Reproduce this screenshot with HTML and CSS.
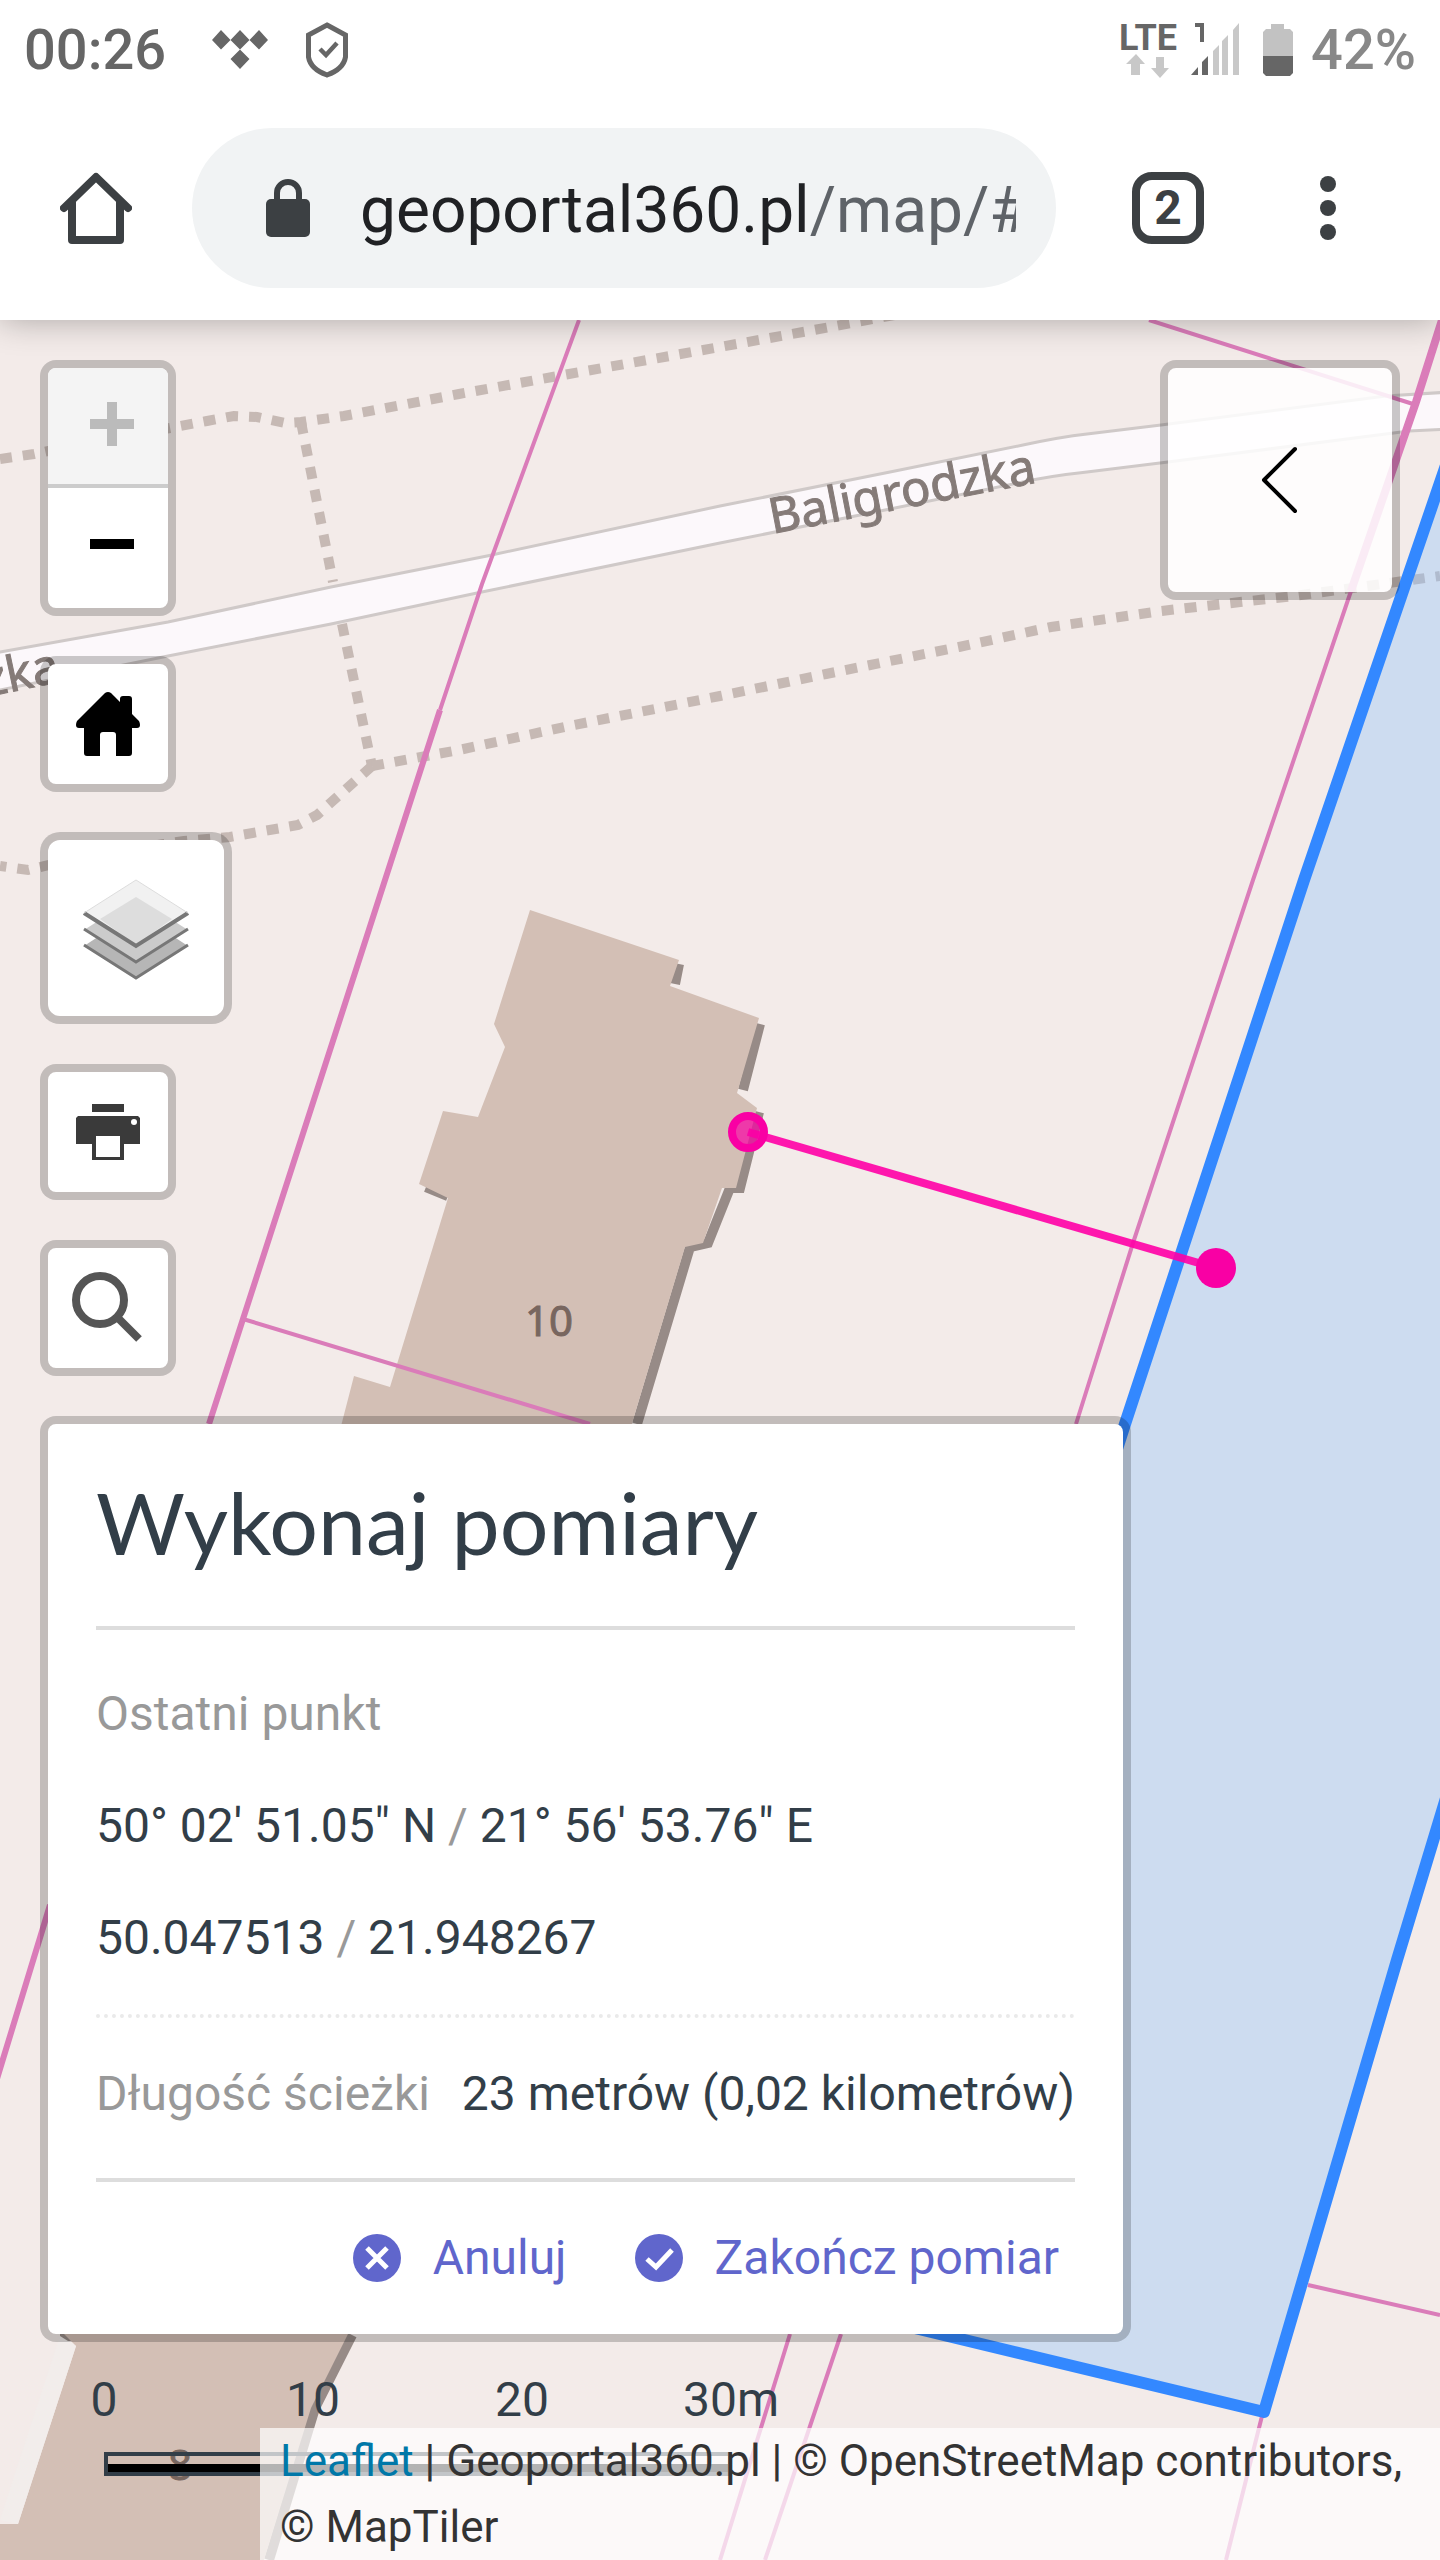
FILE: index.html
```html
<!DOCTYPE html>
<html lang="pl">
<head>
<meta charset="utf-8">
<meta name="viewport" content="width=device-width">
<title>Geoportal360 – mapa</title>
<link rel="stylesheet" href="styles.css">
</head>
<body>
<header class="chrome">
  <div class="status">
    <span class="clock">00:26</span>
    <svg class="tidal" width="56" height="40" viewBox="0 0 56 40" fill="#666" aria-hidden="true"><path d="M9 0l9.500 10-9.500 9.500L0 10zM28 0l9.500 10L28 19.500 18.500 10zM47 0l9 10-9 9.500L37.500 10zM28 19.500l9.500 9.500L28 39l-9.500-10z"/></svg>
    <svg class="shield" width="42" height="56" viewBox="0 0 42 56" fill="none" stroke="#666" stroke-width="5" aria-hidden="true"><path d="M21 3l18.500 10v22q-2 12-18.500 18Q4.500 47 2.500 35V13z"/><path d="M14 27l6 6 11-12" stroke-width="4.500"/></svg>
    <div class="network">
      <span class="lte">LTE</span>
      <svg width="44" height="24" viewBox="0 0 44 24" fill="#c8c8c8" aria-hidden="true"><path d="M10 0l9 10h-5v11H5V10H0zM30 3h8v11h5l-9 10-9-10h5z"/></svg>
    </div>
    <svg width="52" height="54" viewBox="0 0 52 54" aria-hidden="true"><g fill="#666"><path d="M6 0h9v19h-4V4H6z"/><path d="M2 52l7-8v8zM13 52V39l6-6v19z"/></g><path fill="#c8c8c8" d="M24 52V28l6-6v30zM33 52V18l6-6v40zM44 52V7l6-7v52z"/></svg>
    <svg width="30" height="52" viewBox="0 0 30 52" aria-hidden="true"><path fill="#c2c2c2" d="M8 0h13v5h6l3 3v24H0V8l3-3h5z"/><path fill="#666" d="M0 32h30v17l-3 3H3l-3-3z"/></svg>
    <span class="percent">42%</span>
  </div>
  <div class="toolbar">
    <button class="tool" aria-label="Strona główna"><svg width="72" height="72" viewBox="0 0 72 72" fill="none" stroke="#3c4043" stroke-width="8" stroke-linecap="round" stroke-linejoin="round"><path d="M4 36L36 5l32 31"/><path d="M12 30v38h48V30" stroke-linecap="butt"/></svg></button>
    <div class="omnibox">
      <svg width="44" height="58" viewBox="0 0 44 58" aria-hidden="true"><rect y="20" width="44" height="38" rx="5" fill="#3c4043"/><path d="M11 22V14a11 11 0 0 1 22 0v8" fill="none" stroke="#3c4043" stroke-width="6"/></svg>
      <span class="url">geoportal360.pl<span class="path">/map/#</span></span>
    </div>
    <button class="tabs">2</button>
    <button class="tool menu" aria-label="Menu"><svg width="16" height="64" viewBox="0 0 16 64" fill="#3c4043"><circle cx="8" cy="8" r="8"/><circle cx="8" cy="32" r="8"/><circle cx="8" cy="56" r="8"/></svg></button>
  </div>
</header>

<main class="map">
  <svg class="canvas" viewBox="0 320 1440 2240" preserveAspectRatio="xMinYMin slice" aria-hidden="true">
    <rect y="320" width="1440" height="2240" fill="#f3ebe9"/>
    <g class="paths">
      <path d="M0 459L34 454 90 442 170 428 207 421 234 416 257 417 285 423 301 422 344 416 459 394 569 374 720 347 803 332 900 314"/>
      <path d="M301 422L333 582M342 624L372 766"/>
      <path d="M372 766L459 750 569 726 720 696 826 674 959 647 1051 627 1161 611 1294 596 1440 576"/>
      <path d="M372 766L317 815 298 825 230 837 184 841 90 855 28 870 0 866"/>
    </g>
    <path class="road" d="M-10 654L0 652 168 622 331 587 487 556 720 506 890 472 1023 445Q1060 437 1087 434L1161 425 1386 396 1450 392V429L1409 431 1168 462 1087 472Q1050 476 1023 482L890 509 720 543 477 593 331 624 168 656 -10 692z"/>
    <text class="street" text-anchor="middle" transform="translate(905 508) rotate(-11)">Baligrodzka</text>
    <text class="street" text-anchor="end" transform="translate(62 681) rotate(-12)">Baligrodzka</text>
    <path class="shade" d="M679 964l-4 20M760 1024L743 1090M759 1112L740 1188H730L708 1243 690 1247 637 1424M426 1187l22 9M352 2335L315 2408 269 2560M60 2336h24"/>
    <path class="building" d="M530 910L679 960 670 986 759 1018 737 1093 757 1108 736 1188 722 1188 703 1243 685 1247 630 1430H340L354 1376 390 1387 448 1198 419 1184 443 1111 478 1117 505 1047 494 1024z"/>
    <path class="building" d="M60 2330H350L311 2408 264 2560H0V2524H18L76 2346z"/>
    <path fill="#f2edeb" d="M18 2524L76 2346 60 2336 0 2520z"/>
    <text class="number" x="549" y="1336">10</text>
    <text class="number" x="180" y="2480">8</text>
    <g class="parcels">
      <path d="M579 320L482 584 440 710"/>
      <path stroke-width="6" d="M440 710L243 1319 209 1424M50 1905L-4 2082"/>
      <path d="M243 1319L590 1424M1149 320L1413 404M1308 2285L1440 2315M790 2334L720 2560M841 2334L765 2560M1263 2412L1226 2560"/>
      <path stroke-width="8" d="M1442 320L1416 402 1351 591"/>
      <path d="M1351 591L1253 880 1133 1243 1076 1424"/>
    </g>
    <path class="selected" d="M1480 366L1304 880 1125 1424 840 2310 1264 2412 1397 1960 1480 1686z"/>
    <path class="measure" d="M748 1132L1216 1268"/>
    <circle cx="748" cy="1132" r="16" fill="#f900a4" fill-opacity=".7" stroke="#f900a4" stroke-width="8"/>
    <circle cx="1216" cy="1268" r="20" fill="#f900a4"/>
  </svg>

  <div class="overlay">
    <div class="controls">
      <div class="bar zoom">
        <button disabled aria-label="Przybliż"><svg width="120" height="116"><path d="M64 34v44M42 56h44" stroke="#bbb" stroke-width="10"/></svg></button>
        <button aria-label="Oddal"><svg width="120" height="120"><path d="M42 56h44" stroke="#000" stroke-width="10"/></svg></button>
      </div>
      <div class="bar"><button aria-label="Widok początkowy"><svg width="120" height="120"><path d="M57 29q3-2 6 0l9 9v-3q0-3 3-3h6q3 0 3 3v15l7 7q1 2 1 4 0 3-3 3h-5v25q0 3-3 3H68V71q0-3-3-3H55q-3 0-3 3v21H39q-3 0-3-3V64h-5q-3 0-3-3 0-2 1-4z"/></svg></button></div>
      <div class="bar layers"><button aria-label="Warstwy"><svg width="176" height="176" stroke="#777" stroke-width="3"><path d="M36 106L88 72l52 34-52 33z" fill="#b6b6b6" stroke="none"/><path d="M36 105l52 33 52-33" fill="none"/><path d="M36 90L88 57l52 33-52 33z" fill="#cbcbcb" stroke="none"/><path d="M36 89l52 33 52-33" fill="none"/><path d="M36 73L88 40l52 33-52 33z" fill="#f1f1f1" stroke="none"/><path d="M52 79L88 57l36 22-36 26z" fill="#ddd" stroke="none"/><path d="M36 73l52 33 52-33" fill="none" stroke-width="4"/><path d="M36 73L88 40l52 33" fill="none" stroke="#ddd" stroke-width="1"/></svg></button></div>
      <div class="bar"><button aria-label="Drukuj"><svg width="120" height="120" fill="#3a3a3a"><path d="M44 32h32v8H44zM30 44h60l2 2v26H76v16H44V72H28V46zM48 64v21h24V64z" fill-rule="evenodd"/><circle cx="86" cy="50" r="3" fill="#fff"/></svg></button></div>
      <div class="bar"><button aria-label="Szukaj"><svg width="120" height="120" fill="none" stroke="#555" stroke-width="8"><circle cx="52" cy="52" r="24"/><path d="M69 69l22 22"/></svg></button></div>
    </div>
    <button class="drawer" aria-label="Pokaż panel"><svg width="40" height="70" viewBox="0 0 40 70" fill="none" stroke="#000" stroke-width="4" stroke-linecap="round" stroke-linejoin="round"><path d="M35 4L4 35l31 31"/></svg></button>
  </div>

  <section class="panel">
    <h3>Wykonaj pomiary</h3>
    <div class="results">
      <p class="muted">Ostatni punkt</p>
      <p>50° 02' 51.05" N <span class="muted">/</span> 21° 56' 53.76" E</p>
      <p>50.047513 <span class="muted">/</span> 21.948267</p>
    </div>
    <p class="length"><span class="muted">Długość ścieżki</span><span>23 metrów (0,02 kilometrów)</span></p>
    <div class="tasks">
      <button><svg width="48" height="48"><circle cx="24" cy="24" r="24" fill="#6066cc"/><path d="M14 14l20 20M34 14L14 34" stroke="#fff" stroke-width="5"/></svg>Anuluj</button>
      <button><svg width="48" height="48"><circle cx="24" cy="24" r="24" fill="#6066cc"/><path d="M12 25l9 8 16-17" fill="none" stroke="#fff" stroke-width="5"/></svg>Zakończ pomiar</button>
    </div>
  </section>

  <footer class="bottom">
    <div class="scale">
      <div class="ticks"><span>0</span><span>10</span><span>20</span><span>30m</span></div>
      <div class="rule"></div>
    </div>
    <div class="attribution"><a href="#">Leaflet</a> | Geoportal360.pl | © OpenStreetMap contributors, © MapTiler</div>
  </footer>
</main>
</body>
</html>
```
FILE: styles.css
```css
* { box-sizing: border-box; }
body { margin: 0; min-height: 100vh; display: flex; flex-direction: column; font-family: Roboto, "Liberation Sans", sans-serif; font-size: 48px; line-height: 64px; color: #323e48; }
button { font: inherit; color: inherit; border: 0; padding: 0; background: none; cursor: pointer; }
svg { display: block; flex: none; }
p, h3 { margin: 0; }

.chrome { position: relative; z-index: 1; background: #fff; box-shadow: 0 0 32px rgba(0, 0, 0, .3); }
.status { height: 96px; padding: 4px 24px 0; display: flex; align-items: center; font-size: 56px; font-weight: 500; color: #666; }
.clock { margin-right: 46px; }
.shield { margin: 0 auto 0 38px; }
.network { display: flex; flex-direction: column; align-items: center; margin-right: 12px; }
.lte { font-size: 36px; line-height: 32px; font-weight: 700; }
.network + svg { margin-right: 22px; }
.percent { margin-left: 18px; color: #888; }
.toolbar { height: 224px; padding: 32px 104px 32px 60px; display: flex; align-items: center; }
.omnibox { flex: 1; min-width: 0; height: 160px; margin: 0 76px 0 60px; padding: 0 40px 0 74px; border-radius: 80px; background: #f1f3f4; display: flex; align-items: center; gap: 50px; }
.url { flex: 1; min-width: 0; overflow: hidden; white-space: nowrap; padding-top: 6px; font-size: 64px; line-height: 88px; color: #202124; }
.path { color: #5f6368; }
.tabs { width: 72px; height: 72px; border: 8px solid #3c4043; border-radius: 20px; font-size: 48px; line-height: 56px; font-weight: 700; color: #3c4043; }
.menu { margin-left: 116px; }

.map { position: relative; flex: 1; display: flex; flex-direction: column; overflow: hidden; background: #f3ebe9; padding-top: 40px; }
.canvas { position: absolute; inset: 0; width: 100%; height: 100%; }
.paths { fill: none; stroke: #c6b9b4; stroke-width: 10px; stroke-dasharray: 12 11; }
.road { fill: #fcf8fb; stroke: #cfc9c8; stroke-width: 3px; }
.street, .number { font-family: "Noto Sans", sans-serif; fill: #857b78; }
.street { font-size: 49px; stroke: #857b78; stroke-width: 1px; }
.number { font-size: 42px; text-anchor: middle; fill: #78665f; stroke: #78665f; stroke-width: 1px; }
.shade { fill: none; stroke: #978b87; stroke-width: 10px; }
.building { fill: #d3bfb5; }
.parcels { fill: none; stroke: #da7cb9; stroke-width: 4px; }
.selected { fill: rgba(134, 192, 255, .35); stroke: #38f; stroke-width: 12px; stroke-linejoin: round; }
.measure { fill: none; stroke: #ff00a6; stroke-opacity: .9; stroke-width: 8px; }

.overlay, .panel, .bottom { position: relative; }
.overlay { display: flex; justify-content: space-between; align-items: flex-start; padding: 0 40px; }
.controls { display: flex; flex-direction: column; align-items: flex-start; gap: 40px; }
.bar, .drawer, .panel { border: 8px solid rgba(0, 0, 0, .2); border-radius: 16px; background: #fff; background-clip: padding-box; }
.bar { overflow: hidden; }
.bar button { display: block; }
.zoom button:disabled { background: #f4f4f4; border-bottom: 4px solid #ccc; }
.layers { border-radius: 20px; }
.drawer { width: 240px; height: 240px; background-color: rgba(255, 255, 255, .85); display: flex; align-items: center; justify-content: center; }

.panel { align-self: flex-start; width: 1091px; margin: 40px 40px 0; padding: 0 48px; }
.panel h3 { padding: 50px 0 56px; border-bottom: 4px solid #ddd; font: 400 86px/96px Lato, "Open Sans", sans-serif; }
.results { padding: 52px 0 44px; border-bottom: 4px dotted #eaeaea; display: grid; gap: 48px; }
.muted { color: #999; }
.length { padding: 44px 0 52px; border-bottom: 4px solid #ddd; display: flex; justify-content: space-between; white-space: nowrap; }
.tasks { padding: 44px 16px 44px 0; display: flex; justify-content: flex-end; gap: 68px; color: #6066cc; }
.tasks button { display: flex; align-items: center; gap: 32px; }

.bottom { flex: 1; display: grid; grid-template-columns: 1fr; }
.scale { grid-area: 1 / 1; padding: 26px 0 0 104px; }
.ticks { display: grid; grid-template-columns: repeat(4, 209px); }
.ticks span { justify-self: start; transform: translateX(-50%); }
.rule { margin-top: 20px; width: 628px; height: 24px; border: 4px solid #323e48; background: linear-gradient(transparent 50%, #000 50%); }
.attribution { grid-area: 1 / 1; align-self: end; margin-left: 260px; padding: 0 20px; background: rgba(255, 255, 255, .7); position: relative; font-size: 44px; line-height: 66px; color: #333; }
.attribution a { color: #0078a8; text-decoration: none; }
```
